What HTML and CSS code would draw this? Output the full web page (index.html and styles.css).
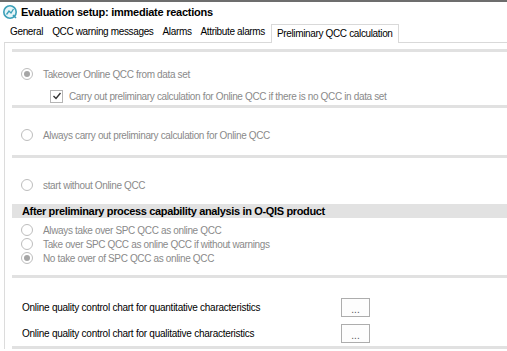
FILE: index.html
```html
<!DOCTYPE html>
<html lang="en">
<head>
    <meta charset="UTF-8">
    <title>Evaluation setup: immediate reactions</title>
    <link rel="stylesheet" href="styles.css">
</head>
<body>
    <div class="window">
        <!-- Title -->
        <div class="titlebar">
            <svg class="app-icon" width="16" height="16" viewBox="0 0 16 16">
                <circle cx="8" cy="8" r="6.2" fill="#e6f5f8" stroke="#3a9fb8" stroke-width="1.6"/>
                <path d="M4.5 10.5 L7 7 L9 9 L11.5 5" fill="none" stroke="#3a9fb8" stroke-width="1.3"/>
                <path d="M11 11 L14 14" stroke="#3a9fb8" stroke-width="1.6"/>
            </svg>
            <span class="title">Evaluation setup: immediate reactions</span>
        </div>

        <!-- Tabs -->
        <div class="tabs">
            <div class="tab">General</div>
            <div class="tab">QCC warning messages</div>
            <div class="tab">Alarms</div>
            <div class="tab">Attribute alarms</div>
            <div class="tab active">Preliminary QCC calculation</div>
        </div>

        <div class="panel">
            <div class="sep"></div>

            <div class="group group-first">
                <div class="option">
                    <span class="radio checked"></span>
                    <span>Takeover Online QCC from data set</span>
                </div>
                <div class="option sub">
                    <span class="checkbox">
                        <svg width="10" height="10" viewBox="0 0 10 10">
                            <path d="M1.5 5 L4 7.5 L8.5 2" fill="none" stroke="#333" stroke-width="1.4"/>
                        </svg>
                    </span>
                    <span>Carry out preliminary calculation for Online QCC if there is no QCC in data set</span>
                </div>
            </div>
            <div class="sep"></div>

            <div class="group group-second">
                <div class="option">
                    <span class="radio"></span>
                    <span>Always carry out preliminary calculation for Online QCC</span>
                </div>
            </div>
            <div class="sep"></div>

            <div class="group group-third">
                <div class="option">
                    <span class="radio"></span>
                    <span>start without Online QCC</span>
                </div>
                <div class="heading">After preliminary process capability analysis in O-QIS product</div>
                <div class="option-list">
                    <div class="option">
                        <span class="radio"></span>
                        <span>Always take over SPC QCC as online QCC</span>
                    </div>
                    <div class="option">
                        <span class="radio"></span>
                        <span>Take over SPC QCC as online QCC if without warnings</span>
                    </div>
                    <div class="option">
                        <span class="radio checked"></span>
                        <span>No take over of SPC QCC as online QCC</span>
                    </div>
                </div>
            </div>
            <div class="sep"></div>

            <div class="group group-charts">
                <div class="chart-row">
                    <span class="chart-label">Online quality control chart for quantitative characteristics</span>
                    <button class="dots">...</button>
                </div>
                <div class="chart-row">
                    <span class="chart-label">Online quality control chart for qualitative characteristics</span>
                    <button class="dots">...</button>
                </div>
            </div>
            <div class="sep"></div>
        </div>
    </div>
</body>
</html>
```

FILE: styles.css
```css
body {
    margin: 0;
    background: #fff;
    font-family: "Liberation Sans", Arial, sans-serif;
    font-size: 10px;
    letter-spacing: -0.35px;
    color: #000;
    overflow: hidden;
}
.window {
    width: 507px;
    height: 351px;
    border-top: 2px solid #6d6d6d;
    box-sizing: border-box;
}
.titlebar {
    display: flex;
    align-items: center;
    gap: 3px;
    height: 20px;
    padding-left: 2px;
}
.title {
    font-weight: bold;
    font-size: 11px;
    letter-spacing: -0.25px;
}
.tabs {
    display: flex;
    align-items: flex-end;
    height: 20px;
    padding-left: 5px;
}
.tab {
    padding: 0 4px 3px 5px;
    line-height: 14px;
}
.active {
    margin-left: 2px;
    padding: 2px 5px 2px 5px;
    border: 1px solid #d9d9d9;
    border-bottom: none;
    background: #fff;
    margin-bottom: -1px;
    position: relative;
}
.panel {
    margin-left: 4px;
    border-top: 1px solid #d9d9d9;
    border-left: 1px solid #dcdcdc;
    padding: 6px 0 0 7px;
    height: 300px;
}
.sep {
    height: 3px;
    background: #e1e1e1;
}
.group {
    color: #8a8a8a;
}
.group-first {
    padding: 15px 0 2px 0;
    display: flex;
    flex-direction: column;
    gap: 8px;
}
.group-second {
    padding: 20px 0 13px 0;
}
.group-third {
    padding: 20px 0 10px 0;
}
.option {
    display: flex;
    align-items: center;
    height: 14px;
    padding-left: 9px;
}
.sub {
    padding-left: 38px;
}
.radio {
    width: 10px;
    height: 10px;
    border: 1px solid #bdbdbd;
    border-radius: 50%;
    margin-right: 10px;
    position: relative;
    flex: none;
}
.radio.checked::after {
    content: "";
    position: absolute;
    left: 2px;
    top: 2px;
    width: 6px;
    height: 6px;
    border-radius: 50%;
    background: #a6a6a6;
}
.checkbox {
    width: 11px;
    height: 11px;
    border: 1px solid #b5b5b5;
    margin-right: 6px;
    display: flex;
    align-items: center;
    justify-content: center;
    flex: none;
}
.heading {
    margin-top: 12px;
    margin-bottom: 5px;
    background: #e2e2e2;
    color: #000;
    font-weight: bold;
    font-size: 11px;
    height: 14px;
    line-height: 14px;
    padding-left: 10px;
    letter-spacing: -0.35px;
}
.group-charts {
    padding: 20px 0 3px 0;
    color: #000;
    display: flex;
    flex-direction: column;
    gap: 7px;
}
.chart-row {
    display: flex;
    align-items: center;
    height: 19px;
}
.chart-label {
    width: 329px;
    box-sizing: border-box;
    padding-left: 10px;
    letter-spacing: -0.25px;
}
.dots {
    width: 29px;
    height: 19px;
    border: 1px solid #adadad;
    background: #fdfdfd;
    font-family: "Liberation Sans", Arial, sans-serif;
    font-size: 10px;
    color: #555;
    padding: 4px 0 0 0;
}
```
